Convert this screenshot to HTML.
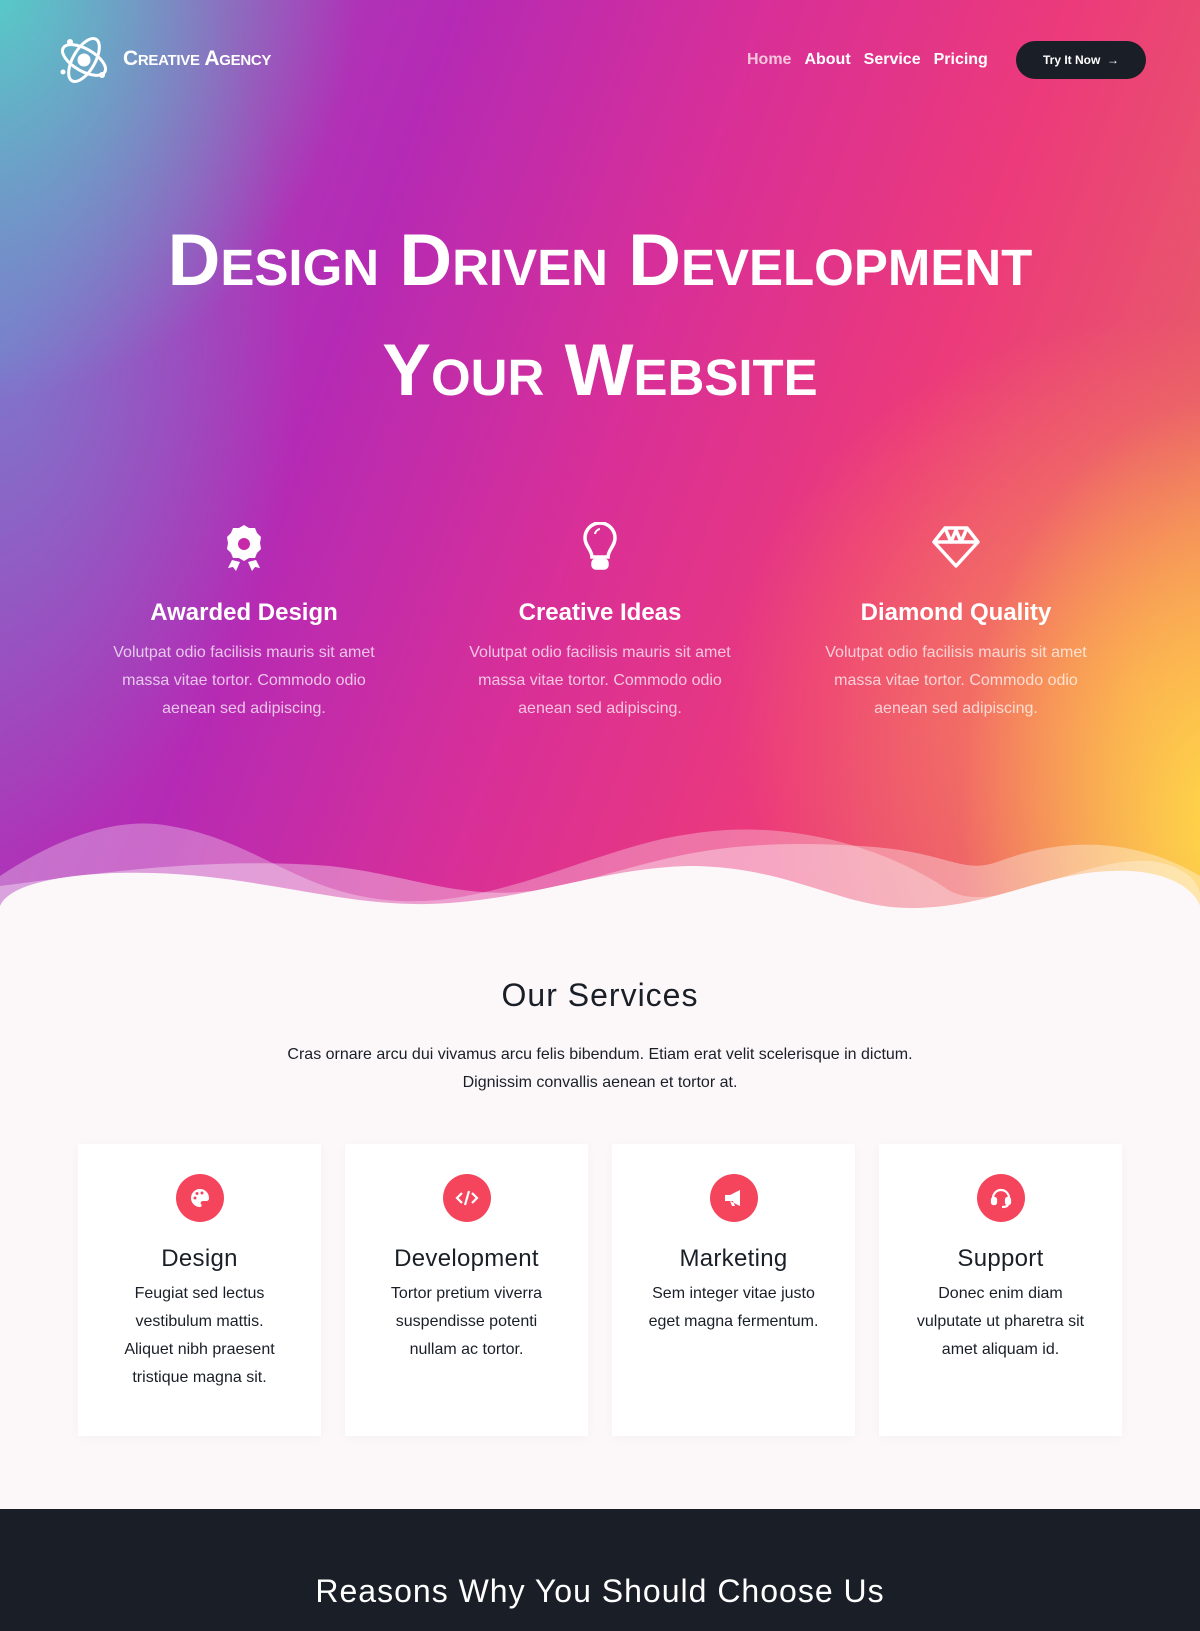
<!DOCTYPE html>
<html><head><meta charset="utf-8"><style>
*{margin:0;padding:0;box-sizing:border-box}
body{width:1200px;height:1600px;overflow:hidden;font-family:"Liberation Sans",sans-serif;background:#fcf8fa;position:relative}
.hero{position:absolute;left:0;top:0;width:1200px;height:920px;
background:
radial-gradient(ellipse 260px 420px at 1220px 820px,rgba(255,220,70,.95),rgba(255,180,80,0) 100%),
radial-gradient(ellipse 420px 380px at 1150px 700px,rgba(250,140,90,.9),rgba(250,140,90,0)),
radial-gradient(ellipse 380px 420px at -20px -20px,rgba(80,215,200,.95),rgba(80,215,200,0)),
radial-gradient(ellipse 300px 500px at 0px 350px,rgba(110,140,210,.7),rgba(110,140,210,0)),
linear-gradient(110deg,#9b4fc0 0%,#b52ab4 30%,#d82f98 50%,#ec3a7a 70%,#e85a6a 88%,#f08a60 100%)}
.nav{position:absolute;top:40px;left:0;width:1200px;height:40px;color:#fff}
.logo{position:absolute;left:58px;top:-10px}
.brand{position:absolute;left:123px;top:7px;font-weight:bold;font-size:21px;font-variant:small-caps;letter-spacing:-.3px}
.menu{position:absolute;left:747px;top:11px;font-size:16px;font-weight:bold}
.menu span{margin-right:13px}
.btn{position:absolute;left:1016px;top:1px;width:130px;height:38px;border-radius:20px;background:#1a1f27;font-size:12px;line-height:38px;text-align:center;font-weight:bold}
h1{position:absolute;left:0;width:1200px;text-align:center;color:#fff;font-size:73px;font-variant:small-caps;font-weight:bold;letter-spacing:0}
.feat{position:absolute;top:522px;width:330px;text-align:center;color:#fff}
.feat h3{font-size:24px;margin-top:22px;font-weight:bold}
.feat p{font-size:16px;line-height:28px;margin:12px auto 0;width:292px;color:rgba(255,255,255,.72)}
.svc{position:absolute;top:977px;width:1200px;text-align:center;color:#1a1f27}
.card{position:absolute;top:1144px;width:243px;height:292px;background:#fff;text-align:center;color:#1a1f27;box-shadow:0 2px 12px rgba(0,0,0,.03)}
.ic{width:48px;height:48px;border-radius:50%;background:#f5455c;margin:30px auto 0;display:flex;align-items:center;justify-content:center}
.card h4{font-size:24px;font-weight:normal;margin-top:23px;letter-spacing:.3px}
.card p{font-size:16px;line-height:28px;margin:7px 35px 0}
.dark{position:absolute;top:1509px;left:0;width:1200px;height:122px;background:#1a1f27;color:#fff;text-align:center}
</style></head><body>
<div class="hero"></div>
<svg style="position:absolute;left:0;top:796px" width="1200" height="140">
<path d="M0 80 C60 40 120 20 170 30 C260 45 300 100 400 105 C500 110 600 50 690 38 C800 20 900 60 950 95 C1000 120 1080 60 1150 65 C1190 70 1200 90 1200 100 L1200 140 L0 140Z" fill="rgba(255,255,255,.3)"/>
<path d="M0 90 C80 80 200 60 330 70 C420 80 470 110 560 90 C650 70 700 40 860 50 C950 55 960 80 1000 65 C1080 35 1150 50 1200 80 L1200 140 L0 140Z" fill="rgba(255,255,255,.35)"/>
<path d="M0 110 C10 85 80 75 153 77 C260 80 340 110 428 108 C530 105 600 72 689 70 C790 70 840 112 910 112 C990 112 1040 78 1110 75 C1170 72 1195 95 1200 110 L1200 140 L0 140Z" fill="#fcf8fa"/>
</svg>
<div class="nav">
<svg class="logo" width="52" height="60" viewBox="0 0 52 60" fill="none" stroke="#fff" stroke-width="3"><ellipse cx="26" cy="30" rx="24" ry="11" transform="rotate(30 26 30)"/><ellipse cx="26" cy="30" rx="24" ry="11" transform="rotate(-60 26 30)"/><circle cx="26" cy="30" r="5" fill="#fff"/><circle cx="12" cy="12" r="3" fill="#fff" stroke="none"/><circle cx="44" cy="45" r="3" fill="#fff" stroke="none"/><circle cx="5" cy="42" r="2.5" fill="#fff" stroke="none"/></svg>
<div class="brand">Creative Agency</div>
<div class="menu"><span style="color:#f4c6dc">Home</span><span>About</span><span>Service</span><span>Pricing</span></div>
<div class="btn">Try It Now &nbsp;→</div>
</div>
<h1 style="top:219px">Design Driven Development</h1>
<h1 style="top:329px">Your Website</h1>
<div class="feat" style="left:79px"><svg width="40" height="50" viewBox="0 0 40 50"><path d="M20 3 l5 3 6 0 2 5 4 4 -1 6 1 6 -4 4 -2 5 -6 0 -5 3 -5 -3 -6 0 -2 -5 -4 -4 1 -6 -1 -6 4 -4 2 -5 6 0z" fill="#fff"/><circle cx="20" cy="22" r="6" fill="#c72aa8"/><path d="M8 38 l-4 8 5 -1 3 4 4 -9z M32 38 l4 8 -5 -1 -3 4 -4 -9z" fill="#fff"/></svg><h3>Awarded Design</h3><p>Volutpat odio facilisis mauris sit amet massa vitae tortor. Commodo odio aenean sed adipiscing.</p></div>
<div class="feat" style="left:435px"><svg width="40" height="50" viewBox="0 0 40 50" fill="none" stroke="#fff" stroke-width="3.5"><path d="M12 35 C12 28 5 24 5 16 A15 15 0 0 1 35 16 C35 24 28 28 28 35Z"/><path d="M15 12 a6 6 0 0 1 5 -5" stroke-width="2"/><rect x="13" y="38" width="14" height="8" rx="3" fill="#fff"/></svg><h3>Creative Ideas</h3><p>Volutpat odio facilisis mauris sit amet massa vitae tortor. Commodo odio aenean sed adipiscing.</p></div>
<div class="feat" style="left:791px"><svg width="50" height="50" viewBox="0 0 50 50" fill="none" stroke="#fff" stroke-width="3.5" stroke-linejoin="round"><path d="M14 6 H36 L47 20 L25 44 L3 20Z M3 20 H47 M14 6 L20 20 L25 8 L30 20 L36 6"/></svg><h3>Diamond Quality</h3><p>Volutpat odio facilisis mauris sit amet massa vitae tortor. Commodo odio aenean sed adipiscing.</p></div>
<div class="svc"><div style="font-size:32px;letter-spacing:1px">Our Services</div>
<p style="font-size:16px;line-height:28px;margin:27px auto 0;width:650px">Cras ornare arcu dui vivamus arcu felis bibendum. Etiam erat velit scelerisque in dictum. Dignissim convallis aenean et tortor at.</p></div>
<div class="card" style="left:78px"><div class="ic"><svg width="20" height="20" viewBox="0 0 20 20"><path d="M10 1a9 9 0 0 0 0 18c2 0 2-2 1-3s0-3 2-3h3c2 0 3-1 3-3A9 9 0 0 0 10 1z" fill="#fff"/><circle cx="5" cy="10" r="1.5" fill="#f5455c"/><circle cx="7" cy="5.5" r="1.5" fill="#f5455c"/><circle cx="12" cy="5" r="1.5" fill="#f5455c"/></svg></div><h4>Design</h4><p>Feugiat sed lectus vestibulum mattis. Aliquet nibh praesent tristique magna sit.</p></div>
<div class="card" style="left:345px"><div class="ic"><svg width="24" height="20" viewBox="0 0 24 20" fill="none" stroke="#fff" stroke-width="2.2"><path d="M7 5 L2 10 L7 15 M17 5 L22 10 L17 15 M14 3 L10 17"/></svg></div><h4>Development</h4><p>Tortor pretium viverra suspendisse potenti nullam ac tortor.</p></div>
<div class="card" style="left:612px"><div class="ic"><svg width="22" height="20" viewBox="0 0 22 20"><path d="M2 7 h5 l10 -5 v16 l-10 -5 h-5z M7 13 l2 5 h3 l-2 -5z" fill="#fff"/></svg></div><h4>Marketing</h4><p>Sem integer vitae justo eget magna fermentum.</p></div>
<div class="card" style="left:879px"><div class="ic"><svg width="22" height="22" viewBox="0 0 22 22" fill="none" stroke="#fff" stroke-width="2.2"><path d="M3 13 v-2 a8 8 0 0 1 16 0 v2"/><rect x="2" y="11" width="4" height="6" rx="1.5" fill="#fff"/><rect x="16" y="11" width="4" height="6" rx="1.5" fill="#fff"/><path d="M18 17 q0 3 -6 3"/></svg></div><h4>Support</h4><p>Donec enim diam vulputate ut pharetra sit amet aliquam id.</p></div>
<div class="dark"><div style="font-size:32px;margin-top:64px;letter-spacing:1px">Reasons Why You Should Choose Us</div></div>
</body></html>
